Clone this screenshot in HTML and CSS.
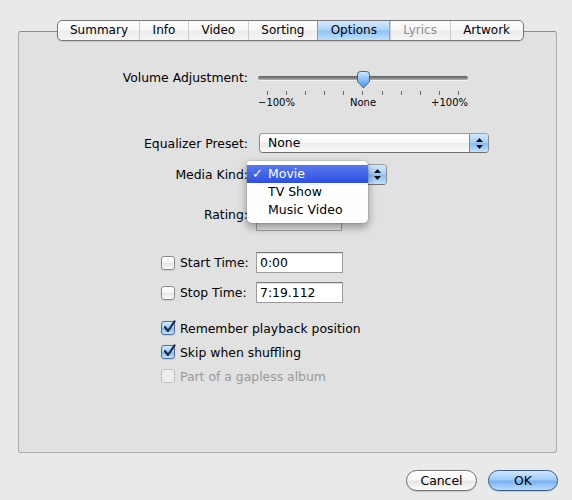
FILE: index.html
```html
<!DOCTYPE html>
<html lang="en">
<head>
<meta charset="utf-8">
<title>Options</title>
<link rel="stylesheet" href="styles.css">
</head>
<body>
<div class="window">
  <nav class="tabs">
    <span class="tab">Summary</span>
    <span class="tab">Info</span>
    <span class="tab">Video</span>
    <span class="tab">Sorting</span>
    <span class="tab active">Options</span>
    <span class="tab disabled">Lyrics</span>
    <span class="tab">Artwork</span>
  </nav>

  <section class="panel">
    <div class="row volume">
      <span class="lbl rail-lbl">Volume Adjustment:</span>
      <div class="slider">
        <div class="rail">
          <div class="groove"></div>
          <svg class="knob" width="15" height="18" viewBox="0 0 15 18">
            <defs>
              <linearGradient id="knobFill" x1="0" y1="0" x2="0" y2="1">
                <stop offset="0" stop-color="#d6e9fd"/>
                <stop offset="0.45" stop-color="#8ec2f7"/>
                <stop offset="1" stop-color="#4a97ee"/>
              </linearGradient>
            </defs>
            <path d="M1.5 3.5 Q1.5 0.5 4.5 0.5 H10.5 Q13.5 0.5 13.5 3.5 V10.5 L7.5 17 L1.5 10.5 Z" fill="url(#knobFill)" stroke="#3d5f92" stroke-width="1"/>
          </svg>
        </div>
        <div class="ticks">
          <i></i><i></i><i></i><i></i><i></i><i></i><i></i><i></i><i></i><i></i><i></i>
        </div>
        <div class="scale"><span>−100%</span><span>None</span><span>+100%</span></div>
      </div>
    </div>

    <div class="row eq">
      <span class="lbl">Equalizer Preset:</span>
      <div class="popup wide">
        <span class="value">None</span>
        <span class="arrows">
          <svg width="7" height="11" viewBox="0 0 7 11"><path d="M3.5 0 L7 4 H0 Z M0 7 H7 L3.5 11 Z" fill="#111"/></svg>
        </span>
      </div>
    </div>

    <div class="row kind">
      <span class="lbl">Media Kind:</span>
      <div class="popup narrow">
        <span class="value">Movie</span>
        <span class="arrows">
          <svg width="7" height="11" viewBox="0 0 7 11"><path d="M3.5 0 L7 4 H0 Z M0 7 H7 L3.5 11 Z" fill="#111"/></svg>
        </span>
        <ul class="menu">
          <li class="item selected"><span class="tick">✓</span>Movie</li>
          <li class="item">TV Show</li>
          <li class="item">Music Video</li>
        </ul>
      </div>
    </div>

    <div class="row rating">
      <span class="lbl">Rating:</span>
      <div class="rating-field"></div>
    </div>

    <div class="row time first-time">
      <label class="lbl check-lbl"><span class="box"></span>Start Time:</label>
      <span class="field">0:00</span>
    </div>

    <div class="row time">
      <label class="lbl check-lbl"><span class="box"></span>Stop Time:</label>
      <span class="field">7:19.112</span>
    </div>

    <div class="checks">
      <label class="check"><span class="box on"><svg width="14" height="14" viewBox="0 0 14 14"><path d="M3 7.2 L6 11 L12.5 1.5" fill="none" stroke="#1b2a4a" stroke-width="2.2" stroke-linecap="round" stroke-linejoin="round"/></svg></span>Remember playback position</label>
      <label class="check"><span class="box on"><svg width="14" height="14" viewBox="0 0 14 14"><path d="M3 7.2 L6 11 L12.5 1.5" fill="none" stroke="#1b2a4a" stroke-width="2.2" stroke-linecap="round" stroke-linejoin="round"/></svg></span>Skip when shuffling</label>
      <label class="check dim"><span class="box off"></span>Part of a gapless album</label>
    </div>
  </section>

  <div class="buttons">
    <span class="btn">Cancel</span>
    <span class="btn default">OK</span>
  </div>
</div>
</body>
</html>
```

FILE: styles.css
```css
html, body {
  margin: 0;
  padding: 0;
  background: #e9e9e9;
}

body {
  font-family: "DejaVu Sans", "Liberation Sans", sans-serif;
  font-size: 12.4px;
  color: #000;
}

.window {
  width: 572px;
  height: 500px;
  box-sizing: border-box;
  padding: 20px 0 0 18px;
}

/* segmented tab control sitting on the panel's top edge */
.tabs {
  position: relative;
  z-index: 2;
  display: flex;
  width: max-content;
  height: 21px;
  box-sizing: border-box;
  margin-left: 39px;
  border: 1px solid #767676;
  border-radius: 5px;
  overflow: hidden;
  font-size: 12px;
  background: linear-gradient(#ffffff 0%, #f7f7f7 48%, #ececec 52%, #f6f6f6 100%);
  box-shadow: 0 1px 1px rgba(0, 0, 0, 0.12);
}

.tab {
  padding: 0 12.6px;
  line-height: 19px;
  border-left: 1px solid #cdcdcd;
  white-space: nowrap;
}

.tab:first-child {
  border-left: 0;
  padding: 0 11px 0 12px;
}

.tab.active {
  background: linear-gradient(#d6eafe 0%, #acd3fb 48%, #8fc2f6 52%, #bde0fd 100%);
  border-left-color: #7a9cc8;
  box-shadow: inset -1px 0 0 #8aa9d0;
}

.tab.disabled {
  color: #8f8f8f;
}

.panel {
  position: relative;
  z-index: 1;
  box-sizing: border-box;
  width: 539px;
  height: 422px;
  margin-top: -10px;
  padding-top: 36px;
  background: #e1e1e1;
  border: 1px solid #ababab;
  border-top-color: #8d8d8d;
  border-radius: 3px;
}

.row {
  display: flex;
  align-items: center;
}

.lbl {
  flex: none;
  width: 229px;
  margin-right: 10px;
  text-align: right;
  white-space: nowrap;
}

/* volume slider */
.volume {
  align-items: flex-start;
}

.rail-lbl {
  line-height: 20px;
}

.slider {
  width: 210px;
}

.rail {
  position: relative;
  height: 20px;
  box-sizing: border-box;
  padding-top: 8px;
}

.groove {
  height: 4px;
  border-radius: 2px;
  background: linear-gradient(#5b5b5b, #8a8a8a 60%, #b4b4b4);
  box-shadow: 0 1px 0 rgba(255, 255, 255, 0.6);
}

.knob {
  position: absolute;
  left: 98px;
  top: 3px;
}

.ticks {
  display: flex;
  justify-content: space-between;
  margin: 3px 9px 0 9px;
  height: 4px;
}

.ticks i {
  width: 1px;
  background: #6a6a6a;
}

.scale {
  display: flex;
  justify-content: space-between;
  margin-top: 1px;
  line-height: 14px;
  font-size: 10px;
}

/* pop-up buttons */
.eq {
  margin-top: 23px;
}

.kind {
  margin-top: 11px;
}

.popup {
  position: relative;
  display: flex;
  box-sizing: border-box;
  height: 20px;
  border: 1px solid #8d8d8d;
  border-top-color: #9c9c9c;
  border-bottom-color: #6f6f6f;
  border-radius: 4px;
  background: linear-gradient(#ffffff 0%, #f8f8f8 48%, #ececec 52%, #fafafa 100%);
}

.popup.wide {
  width: 230px;
  margin-left: 1px;
}

.popup.narrow {
  width: 129px;
  height: 21px;
}

.popup .value {
  flex: 1;
  padding-left: 8px;
  line-height: 18px;
}

.arrows {
  flex: none;
  width: 18px;
  display: flex;
  align-items: center;
  justify-content: center;
  border-left: 1px solid #6f8cb6;
  border-radius: 0 3px 3px 0;
  background: linear-gradient(#d3e8fe 0%, #a6cffb 48%, #86bcf5 52%, #c2e2fd 100%);
}

/* open menu of the Media Kind pop-up */
.menu {
  position: absolute;
  left: -12px;
  top: -4px;
  z-index: 5;
  width: 121px;
  margin: 0;
  padding: 4px 0;
  list-style: none;
  background: rgba(255, 255, 255, 0.97);
  border-radius: 3px 5px 5px 5px;
  box-shadow: 0 4px 10px rgba(0, 0, 0, 0.38), 0 0 0 1px rgba(0, 0, 0, 0.08);
}

.item {
  position: relative;
  height: 18px;
  line-height: 18px;
  padding-left: 21px;
  font-size: 12.5px;
  white-space: nowrap;
}

.item.selected {
  color: #fff;
  background: linear-gradient(#5a79ef, #2d4fe0);
}

.tick {
  position: absolute;
  left: 5px;
  top: 0;
  font-weight: bold;
  font-size: 13px;
}

/* rating */
.rating {
  margin-top: 20px;
  align-items: flex-start;
}

.rating .lbl {
  line-height: 20px;
}

.rating-field {
  box-sizing: border-box;
  width: 86px;
  height: 26px;
  margin-left: -2px;
  border: 1px solid #9e9e9e;
  background: #e4e4e4;
}

/* time fields */
.time {
  margin-top: 9px;
}

.first-time {
  margin-top: 21px;
}

.check-lbl {
  display: flex;
  align-items: center;
  justify-content: flex-start;
  box-sizing: border-box;
  padding-left: 142px;
  margin-right: 8px;
}

.field {
  box-sizing: border-box;
  width: 87px;
  height: 21px;
  padding-left: 3px;
  line-height: 19px;
  background: #fff;
  border: 1px solid #9b9b9b;
  border-top-color: #7a7a7a;
  box-shadow: inset 0 1px 0 #e2e2e2;
}

/* checkboxes */
.box {
  position: relative;
  flex: none;
  box-sizing: border-box;
  width: 14px;
  height: 14px;
  margin-right: 5px;
  border: 1px solid #8b8b8b;
  border-radius: 3px;
  background: linear-gradient(#ffffff 0%, #f4f4f4 48%, #e6e6e6 52%, #fbfbfb 100%);
  box-shadow: 0 1px 1px rgba(0, 0, 0, 0.1);
}

.box.on {
  border-color: #4f6f9e;
  background: linear-gradient(#d2e7fe 0%, #a3cdfa 48%, #80b8f4 52%, #c4e3fd 100%);
}

.box.on svg {
  position: absolute;
  left: 0;
  top: -2px;
}

.box.off {
  border-color: #c3c3c3;
  background: #eeeeee;
  box-shadow: none;
}

.checks {
  margin-top: 13px;
  padding-left: 142px;
}

.check {
  display: flex;
  align-items: center;
  height: 24px;
  white-space: nowrap;
}

.check.dim {
  color: #999999;
}

/* dialog buttons */
.buttons {
  display: flex;
  justify-content: flex-end;
  gap: 11px;
  margin-top: 17px;
  padding-right: 14px;
}

.btn {
  box-sizing: border-box;
  width: 71px;
  height: 21px;
  line-height: 19px;
  text-align: center;
  border: 1px solid #707070;
  border-radius: 11px;
  background: linear-gradient(#ffffff 0%, #f7f7f7 48%, #e6e6e6 52%, #fbfbfb 100%);
  box-shadow: 0 1px 1px rgba(0, 0, 0, 0.15);
}

.btn.default {
  width: 70px;
  border-color: #3c5a8a;
  background: linear-gradient(#cfe6fe 0%, #9fcbfa 48%, #74b0f2 52%, #b9ddfd 100%);
}
```
